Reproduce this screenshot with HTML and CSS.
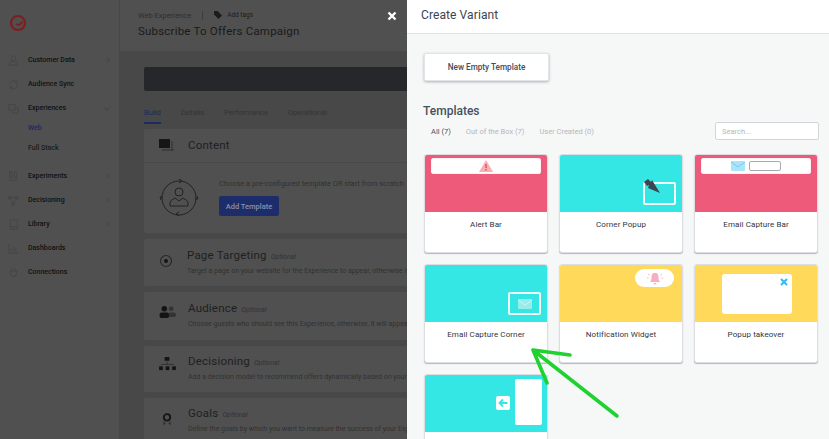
FILE: index.html
```html
<!DOCTYPE html>
<html lang="en">
<head>
  <meta charset="UTF-8" />
  <title>Create Variant</title>
  <link rel="stylesheet" href="styles.css">
</head>
<body>
  <div class="app">

    <!-- Sidebar (dimmed) -->
    <aside class="sidebar">
      <div class="logo">
        <svg width="18" height="18" viewBox="0 0 18 18"><circle cx="9" cy="9" r="7" fill="none" stroke="#7d1f1c" stroke-width="2.200"/><path d="M7 10c3 2 6 0 6-3" fill="none" stroke="#7d1f1c" stroke-width="2"/></svg>
      </div>
      <nav class="nav">
        <div class="nav-item">
          <svg class="nav-icon" viewBox="0 0 14 14"><circle cx="7" cy="4" r="3"/><path d="M2 13v-2c0-2 2-3 5-3s5 1 5 3v2z"/></svg>
          <span>Customer Data</span><i class="chev right"></i>
        </div>
        <div class="nav-item">
          <svg class="nav-icon" viewBox="0 0 14 14"><path d="M2 8a5 5 0 0 1 9-4M12 6a5 5 0 0 1-9 4M11 1v3H8M3 13v-3h3"/></svg>
          <span>Audience Sync</span>
        </div>
        <div class="nav-item">
          <svg class="nav-icon" viewBox="0 0 14 14"><path d="M1 2h8v7H1zM9 6h4v7H6v-4"/></svg>
          <span>Experiences</span><i class="chev down"></i>
        </div>
        <div class="sub-item current">Web</div>
        <div class="sub-item last">Full Stack</div>
        <div class="nav-item">
          <svg class="nav-icon" viewBox="0 0 14 14"><path d="M2 1h3v8H2zM8 1h3v8H8zM1 12h12"/></svg>
          <span>Experiments</span><i class="chev right"></i>
        </div>
        <div class="nav-item">
          <svg class="nav-icon" viewBox="0 0 14 14"><path d="M1 2h3v3H1zM10 2h3v3h-3zM5 10h3v3H5zM4 3h6M3 5l3 5M11 5l-4 5"/></svg>
          <span>Decisioning</span><i class="chev right"></i>
        </div>
        <div class="nav-item">
          <svg class="nav-icon" viewBox="0 0 14 14"><path d="M3 1h9v12H3zM3 10h9"/></svg>
          <span>Library</span><i class="chev right"></i>
        </div>
        <div class="nav-item">
          <svg class="nav-icon" viewBox="0 0 14 14"><path d="M1 1v12h12M4 11V7M7 11V4M10 11V6"/></svg>
          <span>Dashboards</span>
        </div>
        <div class="nav-item">
          <svg class="nav-icon" viewBox="0 0 14 14"><path d="M5 1v4M9 1v4M3 5h8v3a4 4 0 0 1-8 0zM7 12v2"/></svg>
          <span>Connections</span>
        </div>
      </nav>
    </aside>

    <!-- Experience page behind the drawer -->
    <main class="page">
      <header class="page-head">
        <div class="crumbs">
          <span>Web Experience</span>
          <span class="crumb-sep"></span>
          <svg width="8" height="8" viewBox="0 0 9 9"><path d="M0 0h4l5 5-4 4-5-5z" fill="#1c1c1c"/></svg>
          <span class="add-tags">Add tags</span>
        </div>
        <h1>Subscribe To Offers Campaign</h1>
      </header>
      <div class="page-body">
        <div class="dark-bar"></div>
        <div class="tabs">
          <span class="tab current">Build</span>
          <span class="tab">Details</span>
          <span class="tab">Performance</span>
          <span class="tab">Operational</span>
        </div>
        <section class="panel content-panel">
          <div class="content-head">
            <svg class="sec-icon" width="16" height="13" viewBox="0 0 16 13"><rect x="0" y="0" width="11" height="9" fill="#161616"/><path d="M13 2v9M3 11h12" stroke="#2e2e2e" fill="none"/></svg>
            <h2>Content</h2>
          </div>
          <div class="content-body">
            <svg class="cycle" width="40" height="40" viewBox="0 0 40 40" fill="none" stroke="#222" stroke-width="1"><circle cx="20" cy="20" r="17"/><circle cx="20" cy="14" r="4"/><path d="M11 28v-3c0-3 4-4 5-5l4 3 4-3c1 1 5 2 5 5v3z"/><path d="M20 1l3 2-3 2M38 18l1 3-3 0M20 38l-3-2 3-2M2 22l-1-3 3 0"/></svg>
            <div>
              <p class="sec-text lead">Choose a pre-configured template OR start from scratch</p>
              <button class="add-btn">Add Template</button>
            </div>
          </div>
        </section>
        <section class="panel row-panel targeting">
          <svg class="sec-icon" width="14" height="14" viewBox="0 0 14 14"><circle cx="7" cy="7" r="5.500" fill="none" stroke="#2a2a2a" stroke-width="1.200"/><circle cx="7" cy="7" r="2" fill="#161616"/></svg>
          <div class="row-main">
            <h2>Page Targeting <small>Optional</small></h2>
            <p class="sec-text">Target a page on your website for the Experience to appear, otherwise it will appear on all pages</p>
          </div>
        </section>
        <section class="panel row-panel audience">
          <svg class="sec-icon" width="17" height="12" viewBox="0 0 18 13"><circle cx="13" cy="3" r="2.500" fill="#333"/><rect x="10" y="7" width="8" height="5" rx="2" fill="#333"/><circle cx="5.500" cy="3" r="3" fill="#141414"/><rect x="0.500" y="7" width="10" height="6" rx="2" fill="#141414"/></svg>
          <div class="row-main">
            <h2>Audience <small>Optional</small></h2>
            <p class="sec-text">Choose guests who should see this Experience, otherwise, it will appear for all guests</p>
          </div>
        </section>
        <section class="panel row-panel decisioning">
          <svg class="sec-icon" width="17" height="14" viewBox="0 0 18 15" fill="#141414"><rect x="6" y="0" width="5" height="4"/><rect x="0" y="10" width="4" height="4"/><rect x="7" y="10" width="4" height="4"/><rect x="14" y="10" width="4" height="4"/><path d="M2 8h14M8.500 5v3" stroke="#333" fill="none"/></svg>
          <div class="row-main">
            <h2>Decisioning <small>Optional</small></h2>
            <p class="sec-text">Add a decision model to recommend offers dynamically based on your business goals</p>
          </div>
        </section>
        <section class="panel row-panel goals">
          <svg class="sec-icon" width="10" height="13" viewBox="0 0 14 18"><path d="M3 10l-2 7 4-2M11 10l2 7-4-2" fill="#333"/><circle cx="7" cy="6" r="4.500" fill="none" stroke="#141414" stroke-width="2.500"/></svg>
          <div class="row-main">
            <h2>Goals <small>Optional</small></h2>
            <p class="sec-text">Define the goals by which you want to measure the success of your Experience</p>
          </div>
        </section>
      </div>
    </main>
  </div>

  <!-- Close button sits on the dimmed page -->
  <svg class="close-x" width="10" height="10" viewBox="0 0 10 10"><path d="M1.500 1.500l7 7M8.500 1.500l-7 7" stroke="#fff" stroke-width="2.400"/></svg>

  <!-- Create Variant drawer -->
  <div class="drawer">
    <div class="drawer-head">Create Variant</div>
    <div class="drawer-body">
      <button class="empty-btn">New Empty Template</button>
      <h3 class="tpl-title">Templates</h3>
      <div class="filter-row">
        <span class="filter current">All (7)</span>
        <span class="filter">Out of the Box (7)</span>
        <span class="filter">User Created (0)</span>
        <input class="search" placeholder="Search..." />
      </div>
      <div class="tpl-grid">

        <div class="tpl">
          <div class="thumb pink">
            <div class="bar">
              <svg width="14" height="12" viewBox="0 0 14 12"><path d="M7 0l7 12H0z" fill="#f9adb4"/><path d="M7 4v4M7 9v1.500" stroke="#e8384a" stroke-width="1.200"/></svg>
            </div>
          </div>
          <div class="tpl-name">Alert Bar</div>
        </div>

        <div class="tpl">
          <div class="thumb teal">
            <div class="corner-box"></div>
            <svg class="pointer" width="16" height="14" viewBox="0 0 16 14"><path d="M0 3L4 0L7 3L8 1L16 14L4 9L5 6L3 7z" fill="#3d4450"/></svg>
          </div>
          <div class="tpl-name">Corner Popup</div>
        </div>

        <div class="tpl">
          <div class="thumb pink">
            <div class="bar">
              <svg width="14" height="10" viewBox="0 0 14 10"><rect width="14" height="10" rx="1" fill="#a9e4fb"/><path d="M0 1l7 5 7-5" fill="none" stroke="#6fcdf5"/></svg>
              <span class="fake-input"></span>
            </div>
          </div>
          <div class="tpl-name">Email Capture Bar</div>
        </div>

        <div class="tpl">
          <div class="thumb teal">
            <div class="corner-box mail">
              <svg width="14" height="10" viewBox="0 0 14 10"><rect width="14" height="10" rx="1" fill="#98ecec"/><path d="M0 1l7 5 7-5" fill="none" stroke="#c8f7f7"/></svg>
            </div>
          </div>
          <div class="tpl-name">Email Capture Corner</div>
        </div>

        <div class="tpl">
          <div class="thumb yellow">
            <div class="pill">
              <svg width="16" height="13" viewBox="0 0 16 13"><path d="M8 1c3 0 3.500 2 3.500 5 0 2 1 3 1.500 4H3c.5-1 1.500-2 1.500-4C4.500 3 5 1 8 1zM6.500 11h3l-1.500 2z" fill="#f9adc0"/><path d="M1 2l1.500 1M15 2l-1.500 1M0 6h1.500M16 6h-1.500" stroke="#f9adc0"/></svg>
            </div>
          </div>
          <div class="tpl-name">Notification Widget</div>
        </div>

        <div class="tpl">
          <div class="thumb yellow">
            <div class="takeover">
              <svg width="8" height="8" viewBox="0 0 8 8"><path d="M1 1l6 6M7 1L1 7" stroke="#2ebcf5" stroke-width="2"/></svg>
            </div>
          </div>
          <div class="tpl-name">Popup takeover</div>
        </div>

        <div class="tpl">
          <div class="thumb teal">
            <span class="back-btn">
              <svg width="10" height="10" viewBox="0 0 10 10"><path d="M9.500 5H2M5 1.500L1.500 5 5 8.500" fill="none" stroke="#34e6e4" stroke-width="1.800"/></svg>
            </span>
            <div class="side-panel"></div>
          </div>
          <div class="tpl-name"></div>
        </div>

      </div>
    </div>
  </div>

  <!-- Green annotation arrow drawn over the screenshot -->
  <svg class="arrow" width="829" height="439" viewBox="0 0 829 439">
    <path d="M533 350L617 416M533 350L570 355M533 350L547 383" fill="none" stroke="#1fd230" stroke-width="3.600" stroke-linecap="round"/>
  </svg>
</body>
</html>
```

FILE: styles.css
```css
* {
  margin: 0; padding: 0;
  box-sizing: border-box;
}
body {
  width: 829px;
  height: 439px;
  overflow: hidden;
  position: relative;
  background-color: #484848;
  font-family: Roboto, "Liberation Sans", sans-serif;
}
.app {
  display: flex;
  height: 439px;
  overflow: hidden;
}

/* sidebar */
.sidebar {
  width: 120px;
  flex: none;
  background-color: #505050;
  border-right: 1px solid #484848;
}
.logo {
  padding: 14px 0 0 9px;
  height: 48px;
}
.nav-item {
  display: flex;
  align-items: center;
  height: 24px;
  padding-left: 8px;
  font-size: 7px;
  font-weight: 500;
  color: #101010;
}
.nav-icon {
  width: 11px;
  height: 11px;
  margin-right: 9px;
  fill: none;
  stroke: #444;
  stroke-width: 1;
}
.chev {
  width: 4px;
  height: 4px;
  margin-left: auto;
  margin-right: 10px;
  border-right: 1px solid #474747;
  border-bottom: 1px solid #474747;
}
.chev.right { transform: rotate(-45deg); }
.chev.down { transform: rotate(45deg); }
.sub-item {
  height: 18px;
  line-height: 18px;
  padding-left: 28px;
  font-size: 7px;
  font-weight: 500;
  color: #1c1c1c;
}
.sub-item.current {
  color: #1c2a60;
  margin-top: -1px;
  margin-bottom: 1px;
}
.sub-item.last {
  height: 26px;
  line-height: 20px;
}

/* page behind drawer */
.page {
  flex: 1;
  min-width: 0;
  overflow: hidden;
}
.page-head {
  height: 51px;
  background-color: #505050;
  padding: 9px 0 0 18px;
}
.crumbs {
  display: flex;
  align-items: center;
  height: 12px;
  font-size: 7.500px;
  color: #2e2e2e;
}
.crumb-sep {
  width: 1px;
  height: 9px;
  background-color: #3e3e3e;
  margin: 0 11px;
}
.add-tags {
  margin-left: 5px;
  font-size: 6.500px;
  color: #1c1c1c;
}
.page-head h1 {
  font-size: 11.500px;
  font-weight: 400;
  color: #1a1a1a;
  margin-top: 3px;
  letter-spacing: .2px;
}
.page-body {
  padding: 16px 0 0 24px;
  width: 420px;
}
.dark-bar {
  height: 24px;
  background-color: #26272b;
  border-radius: 2px 0 0 2px;
}
.tabs {
  display: flex;
  gap: 20px;
  height: 38px;
  padding-top: 17px;
  font-size: 7.600px;
  color: #343434;
}
.tab {
  height: 16px;
}
.tab.current {
  color: #1b2a63;
  border-bottom: 2px solid #1b2a63;
}
.panel {
  background-color: #505050;
  border-radius: 2px;
  margin-bottom: 6px;
}
.content-panel {
  height: 104px;
}
.content-head {
  display: flex;
  align-items: center;
  height: 34px;
  padding: 0 0 1px 15px;
  border-bottom: 1px solid #484848;
}
.content-head h2 {
  margin-left: 13px;
}
h2 {
  font-size: 11.500px;
  font-weight: 400;
  color: #1f1f1f;
  letter-spacing: .2px;
  white-space: nowrap;
}
h2 small {
  font-size: 7px;
  font-style: italic;
  color: #333;
  letter-spacing: 0;
  margin-left: 1px;
}
.content-body {
  display: flex;
  gap: 20px;
  padding: 16px 0 0 15px;
}
.cycle {
  flex: none;
  margin-top: -1px;
}
.sec-text {
  font-size: 7px;
  color: #303030;
  white-space: nowrap;
}
.sec-text.lead {
  font-size: 7.450px;
}
.add-btn {
  display: block;
  width: 60px;
  height: 20px;
  margin-top: 8px;
  background-color: #1d2d6b;
  border: none;
  border-radius: 2px;
  color: #8a90a8;
  font: 500 7.500px Roboto, sans-serif;
}
.row-panel {
  display: flex;
  align-items: center;
}
.row-panel .sec-icon {
  flex: none;
  margin: -4px 14px 0 15px;
}
.row-main {
  margin-top: -3px;
}
.row-main .sec-text {
  margin-top: 5px;
}
.targeting { height: 47px; }
.audience { height: 48px; }
.audience .sec-icon { margin: -8px 12px 0 15px; }
.decisioning { height: 46px; }
.decisioning .sec-icon { margin: -10px 12px 0 15px; }
.goals { height: 46px; }
.goals .sec-icon { margin: -4px 16px 0 18px; }

.close-x {
  position: absolute;
  left: 387px;
  top: 11px;
}

/* drawer */
.drawer {
  position: absolute;
  left: 407px;
  top: 0;
  width: 422px;
  height: 439px;
  overflow: hidden;
  background-color: #f6f8f8;
}
.drawer-head {
  height: 34px;
  background-color: white;
  border-bottom: 1px solid #dfe2e5;
  padding: 8px 0 0 14px;
  font-size: 12px;
  color: #3b4350;
  letter-spacing: .1px;
}
.drawer-body {
  height: 405px;
  overflow: hidden;
  padding: 19px 11px 0 17px;
}
.empty-btn {
  display: block;
  width: 125px;
  height: 28px;
  background-color: white;
  border: 1px solid #e2e4e8;
  border-radius: 2px;
  box-shadow: 0 1px 3px rgba(60, 66, 80, .4);
  font: 500 8.200px Roboto, sans-serif;
  color: #454c59;
}
.tpl-title {
  font-size: 12px;
  font-weight: 500;
  color: #48505e;
  margin-top: 23px;
  line-height: 15px;
  margin-left: -1px;
}
.filter-row {
  display: flex;
  align-items: center;
  height: 18px;
  margin-top: 3px;
  padding-left: 7px;
  gap: 15px;
  font-size: 7.500px;
  color: #b4b7bc;
}
.filter.current {
  color: #4a505c;
}
.search {
  width: 104px;
  height: 18px;
  margin-left: auto;
  margin-right: -1px;
  padding-left: 6px;
  background-color: white;
  border: 1px solid #d2d5da;
  border-radius: 2px;
  font: 7.500px Roboto, sans-serif;
}
.search::placeholder {
  color: #b4b7bc;
}
.tpl-grid {
  display: grid;
  grid-template-columns: repeat(3, 124px);
  grid-auto-rows: 99px;
  column-gap: 11px;
  row-gap: 11px;
  margin-top: 14px;
}
.tpl {
  background-color: white;
  border: 1px solid #dcdee3;
  border-radius: 3px;
  box-shadow: 0 1px 1px rgba(60, 66, 80, .35);
  overflow: hidden;
}
.thumb {
  position: relative;
  height: 57px;
  display: flex;
  flex-direction: column;
}
.pink { background-color: #ee5a79; }
.teal { background-color: #34e6e4; }
.yellow { background-color: #ffd95a; }
.tpl-name {
  padding-top: 8px;
  text-align: center;
  font-size: 8px;
  font-weight: 400;
  color: #2f3641;
  letter-spacing: .1px;
}
.bar {
  display: flex;
  align-items: center;
  justify-content: center;
  gap: 4px;
  height: 16px;
  margin: 3px 6px 0;
  background-color: white;
  border-radius: 2px;
  border: 1px solid #fff0f2;
}
.fake-input {
  width: 32px;
  height: 10px;
  border: 1px solid #a6a9b0;
  border-radius: 2px;
}
.corner-box {
  position: absolute;
  right: 6px;
  bottom: 7px;
  width: 33px;
  height: 23px;
  border: 2px solid #f0fdfd;
  border-radius: 2px;
}
.corner-box.mail {
  display: flex;
  align-items: center;
  justify-content: center;
}
.pointer {
  position: absolute;
  right: 22px;
  top: 24px;
}
.pill {
  position: absolute;
  top: 4px;
  right: 8px;
  width: 39px;
  height: 18px;
  background-color: white;
  border-radius: 9px;
  display: flex;
  align-items: center;
  justify-content: center;
}
.takeover {
  position: absolute;
  left: 27px;
  top: 9px;
  width: 70px;
  height: 40px;
  background-color: white;
  border-radius: 3px;
}
.takeover svg {
  position: absolute;
  right: 4px;
  top: 4px;
}
.side-panel {
  position: absolute;
  right: 5px;
  top: 4px;
  width: 27px;
  height: 46px;
  background-color: white;
  border-radius: 2px;
}
.back-btn {
  position: absolute;
  right: 37px;
  top: 21px;
  width: 14px;
  height: 14px;
  background-color: white;
  border-radius: 2px;
  display: flex;
  align-items: center;
  justify-content: center;
}
.arrow {
  position: absolute;
  left: 0;
  top: 0;
  pointer-events: none;
}
```
